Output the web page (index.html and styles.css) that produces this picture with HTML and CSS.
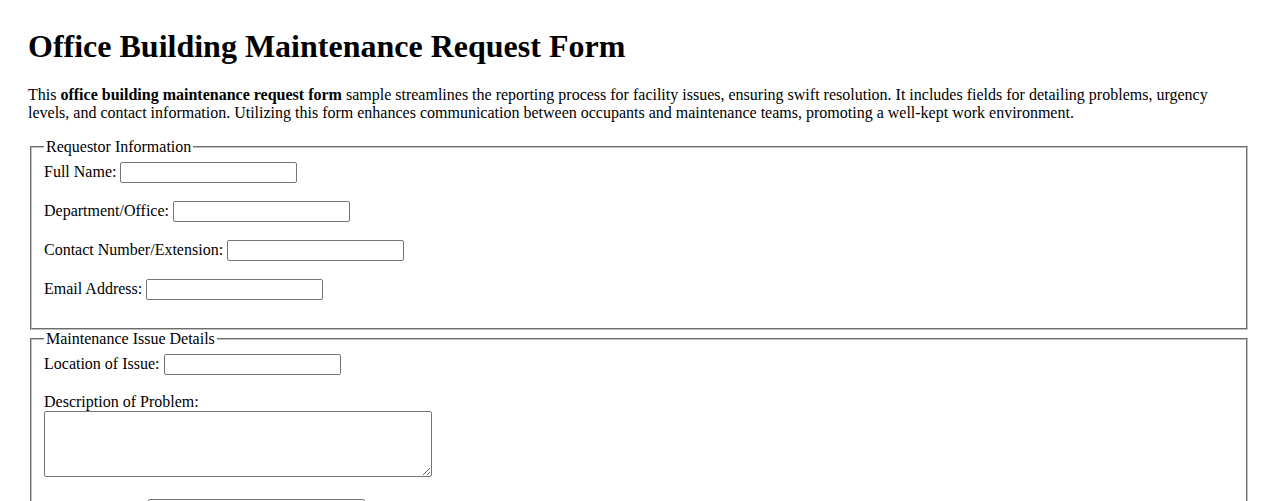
FILE: index.html
```html
<!DOCTYPE html>
<html lang="en">
<head>
<meta charset="utf-8">
<title>Office Building Maintenance Request Form</title>
<link rel="stylesheet" href="styles.css">
</head>
<body>
<h1 class="title">Office Building Maintenance Request Form</h1>
<p class="intro">This <strong>office building maintenance request form</strong> sample streamlines the reporting process for facility issues, ensuring swift resolution. It includes fields for detailing problems, urgency levels, and contact information. Utilizing this form enhances communication between occupants and maintenance teams, promoting a well-kept work environment.</p>
<form class="form">
  <fieldset class="group">
    <legend class="group-title">Requestor Information</legend>
    <label for="name">Full Name:</label> <input class="field" type="text" id="name"><br><br>
    <label for="dept">Department/Office:</label> <input class="field" type="text" id="dept"><br><br>
    <label for="phone">Contact Number/Extension:</label> <input class="field" type="text" id="phone"><br><br>
    <label for="email">Email Address:</label> <input class="field" type="email" id="email"><br><br>
  </fieldset>
  <fieldset class="group">
    <legend class="group-title">Maintenance Issue Details</legend>
    <label for="loc">Location of Issue:</label> <input class="field" type="text" id="loc"><br><br>
    <label for="desc">Description of Problem:</label><br>
    <textarea class="area" id="desc"></textarea><br><br>
    <label for="urg">Urgency Level:</label> <select class="choice" id="urg"><option>-- Select --</option><option>Low</option><option>Medium</option><option>High</option><option>Emergency</option></select><br><br>
  </fieldset>
</form>
</body>
</html>
```
FILE: styles.css
```css
body {
  margin: 0;
  padding: 28px;
  font-family: "Liberation Serif", "Times New Roman", serif;
  font-size: 16px;
  color: #000;
  background: #fff;
}
.title {
  font-size: 32px;
  font-weight: bold;
  margin: 0 0 21.44px;
}
.intro {
  margin: 16px 0;
}
.form {
  margin: 0;
}
.group {
  margin: 0 2px;
  padding: 5.6px 12px 10px;
  border: 2px groove #c0c0c0;
}
.group-title {
  padding: 0 2px;
}
.field {
  box-sizing: border-box;
  width: 177px;
  height: 21px;
  border: 1px solid #767676;
  border-radius: 2px;
  padding: 1px 2px;
  font: 13.33px Arial, "Liberation Sans", sans-serif;
  vertical-align: baseline;
}
.area {
  box-sizing: border-box;
  width: 388px;
  height: 66px;
  border: 1px solid #767676;
  border-radius: 2px;
  padding: 2px;
  font: 13.33px "Liberation Mono", monospace;
  vertical-align: baseline;
}
.choice {
  box-sizing: border-box;
  width: 217px;
  height: 20px;
  border: 1px solid #767676;
  border-radius: 2px;
  font: 13.33px Arial, "Liberation Sans", sans-serif;
  background: #fff;
}
```
